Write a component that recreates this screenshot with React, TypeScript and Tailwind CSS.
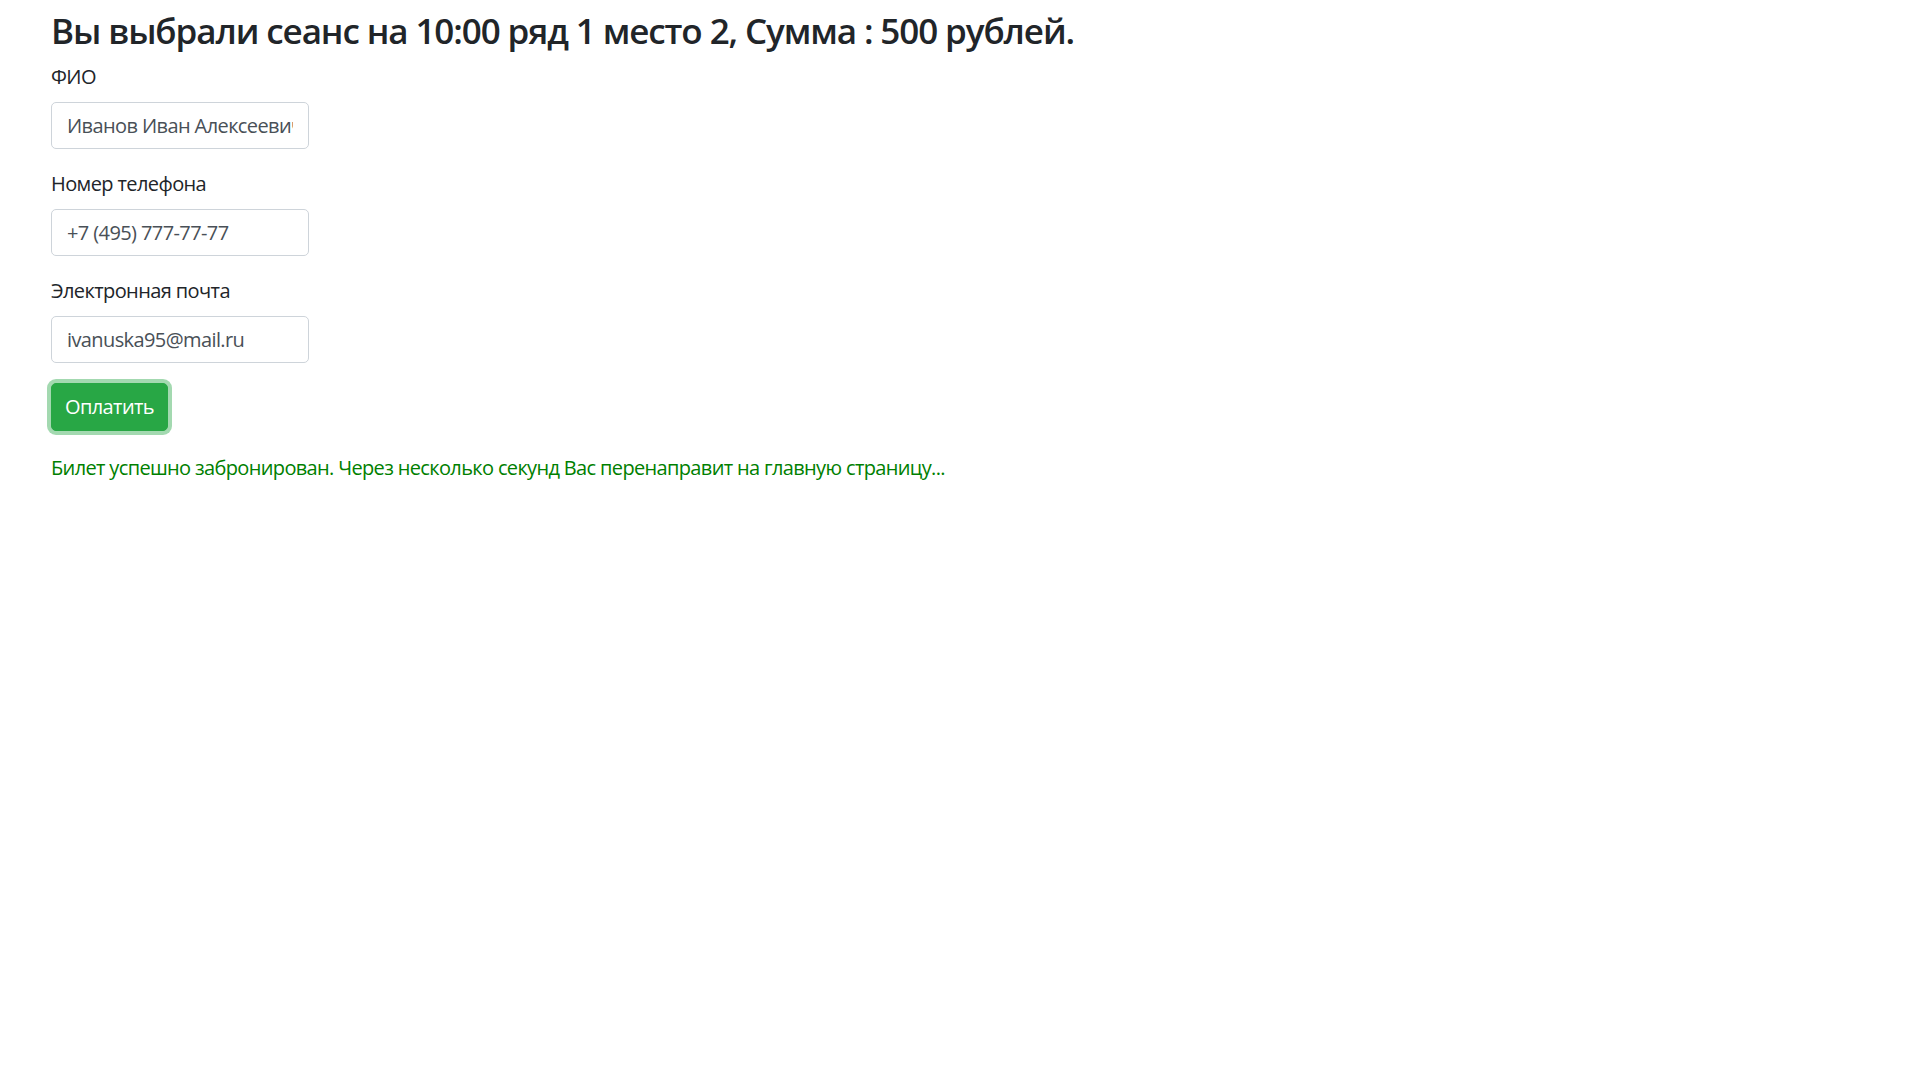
import React from "react";

function Field({ label, value }: { label: string; value: string }) {
  return (
    <div className="mb-[20px]">
      <label className="block mb-[10px] text-[20px] leading-[30px] tracking-[-0.6px] text-[#212529]">{label}</label>
      <input
        defaultValue={value}
        className="block w-[258px] h-[47px] px-[15px] py-[7px] text-[20px] leading-[30px] tracking-[-0.6px] text-[#495057] bg-white border border-[#ced4da] rounded-[5px] outline-none"
      />
    </div>
  );
}

export default function App() {
  return (
    <div className="min-h-screen bg-white pl-[51px] pt-[10px] [font-family:'Open_Sans','Noto_Sans',sans-serif]">
      <h3 className="text-[35px] leading-[42px] font-semibold tracking-[-1.1px] text-[#212529] mb-[10px]">
        Вы выбрали сеанс на 10:00 ряд 1 место 2, Сумма : 500 рублей.
      </h3>
      <Field label="ФИО" value="Иванов Иван Алексеевич" />
      <Field label="Номер телефона" value="+7 (495) 777-77-77" />
      <Field label="Электронная почта" value="ivanuska95@mail.ru" />
      <button className="h-[48px] px-[13px] text-[20px] leading-[30px] tracking-[-0.6px] text-white bg-[#28a745] border border-[#28a745] rounded-[5px] shadow-[0_0_0_4px_rgba(72,180,97,0.5)]">
        Оплатить
      </button>
      <p className="mt-[22px] text-[20px] leading-[30px] tracking-[-0.65px] text-[#008000]">
        Билет успешно забронирован. Через несколько секунд Вас перенаправит на главную страницу...
      </p>
    </div>
  );
}
